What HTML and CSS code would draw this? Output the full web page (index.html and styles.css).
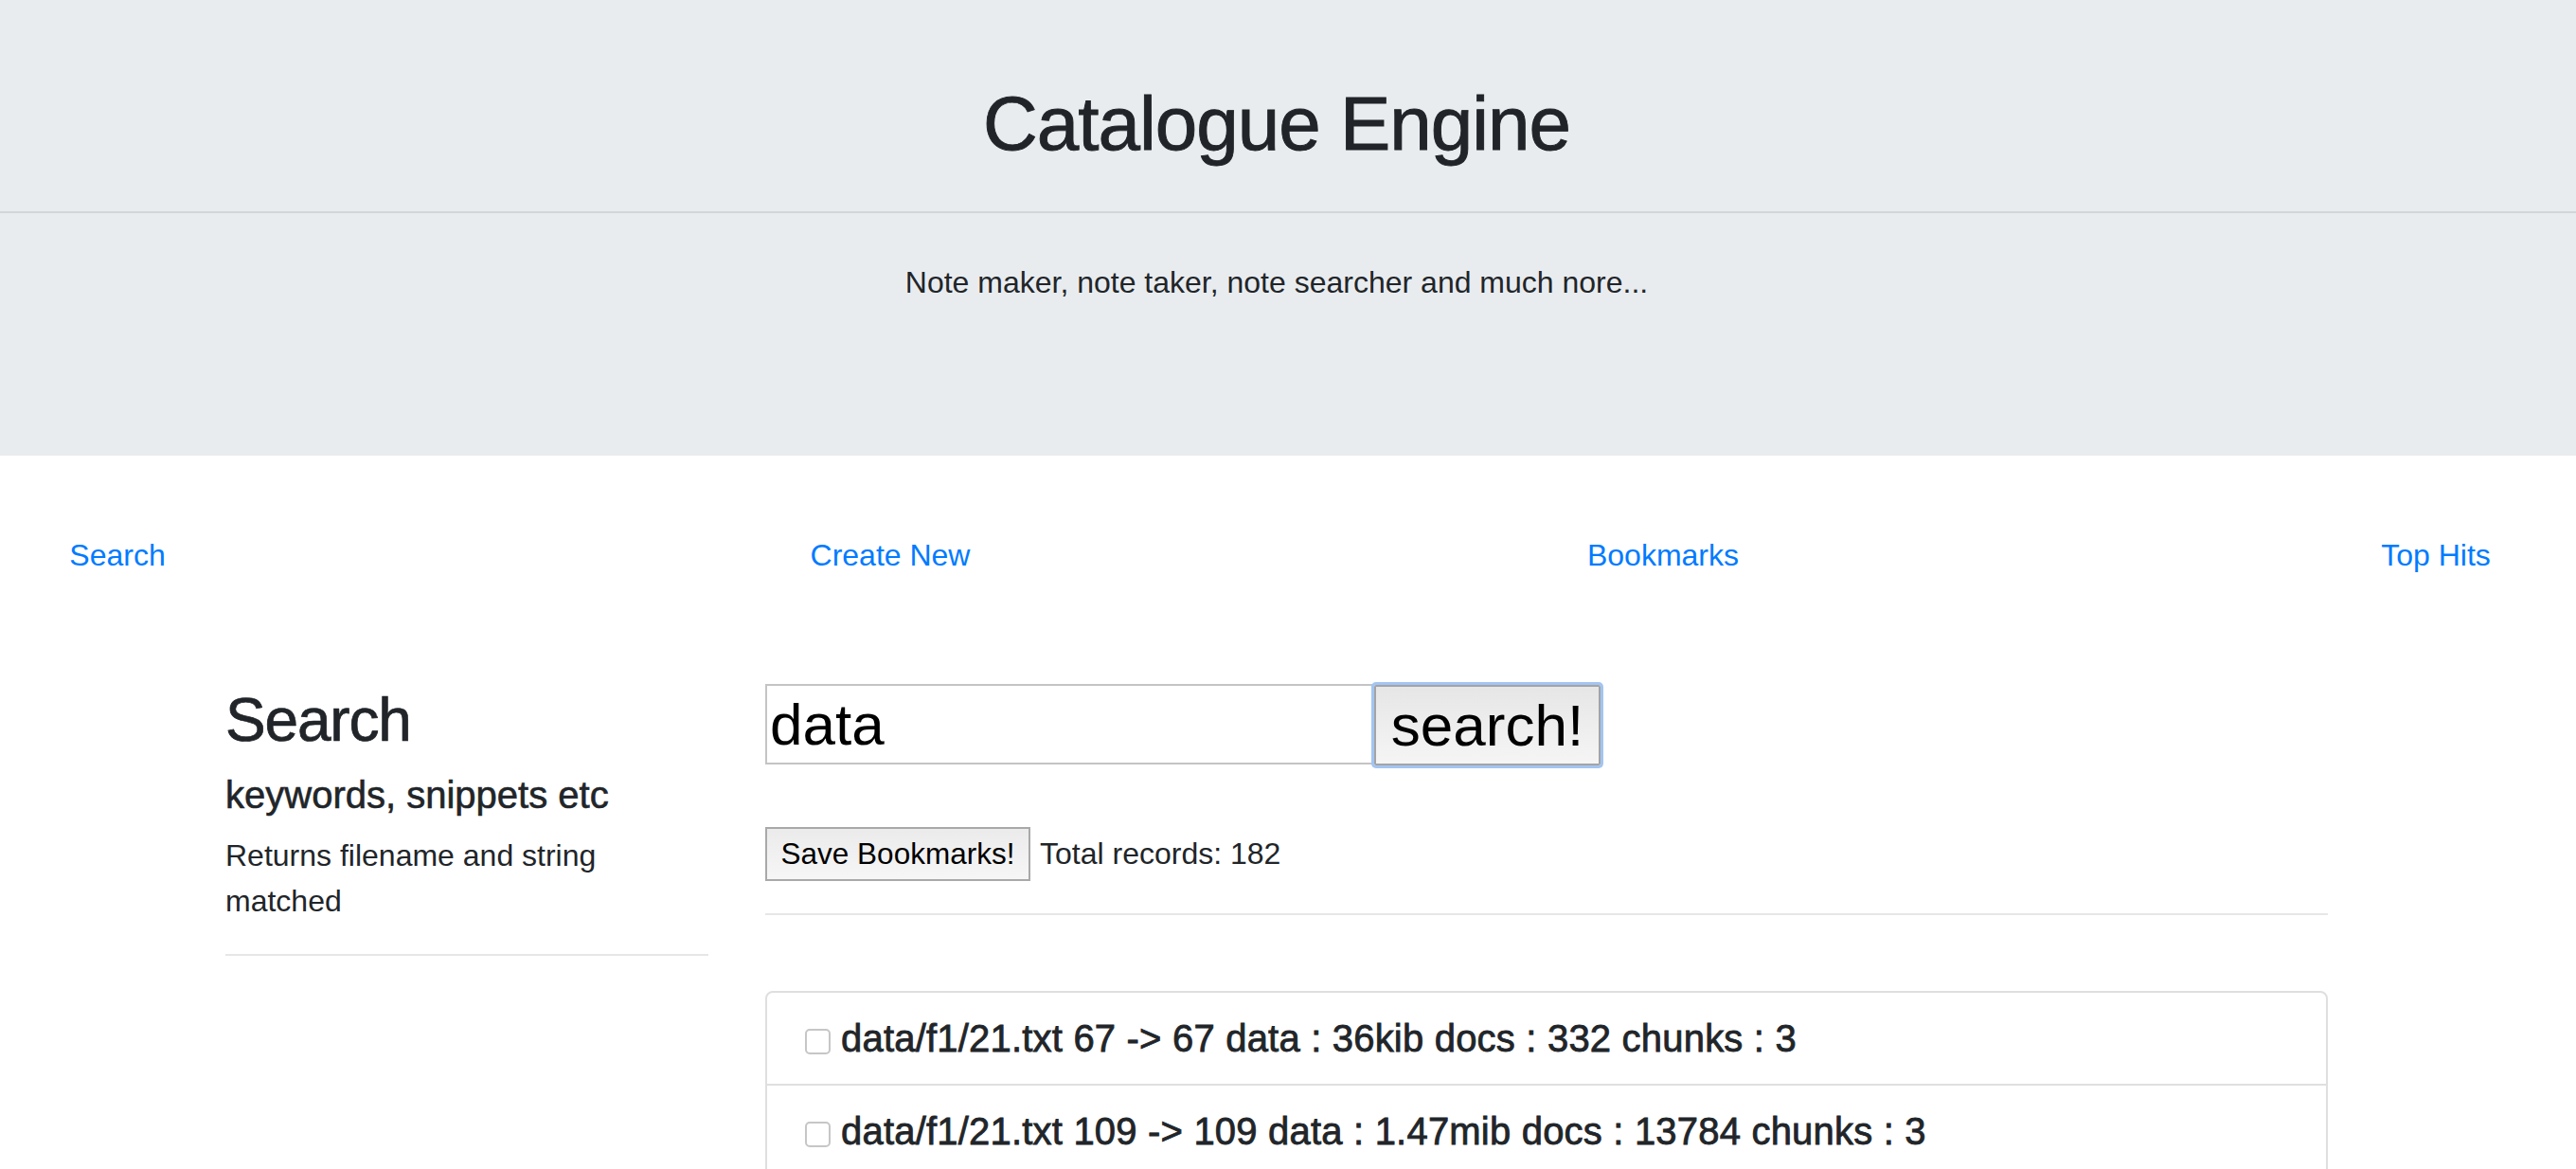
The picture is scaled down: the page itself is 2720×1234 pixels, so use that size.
FILE: index.html
```html
<!DOCTYPE html>
<html lang="en">
<head>
<meta charset="utf-8">
<title>Catalogue Engine</title>
<link rel="stylesheet" href="styles.css">
</head>
<body>
<header class="jumbotron">
  <h1 class="title">Catalogue Engine</h1>
  <hr class="jumbo-rule">
  <p class="lead">Note maker, note taker, note searcher and much nore...</p>
</header>
<div class="page">
  <nav class="nav">
    <a href="#" class="nav-link">Search</a>
    <a href="#" class="nav-link">Create New</a>
    <a href="#" class="nav-link">Bookmarks</a>
    <a href="#" class="nav-link">Top Hits</a>
  </nav>
  <main class="container">
    <aside class="side">
      <h2 class="side-title">Search</h2>
      <h5 class="side-sub">keywords, snippets etc</h5>
      <p class="side-text">Returns filename and string matched</p>
      <hr class="side-rule">
    </aside>
    <section class="results">
      <form class="search-form">
        <input class="search-input" type="text" value="data"><button type="button" class="search-btn">search!</button>
      </form>
      <div class="tools">
        <button type="button" class="save-btn">Save Bookmarks!</button>
        <span class="total">Total records: 182</span>
      </div>
      <hr class="result-rule">
      <ul class="card">
        <li class="row-item"><input type="checkbox" class="pick"><span>data/f1/21.txt 67 -&gt; 67 data : 36kib docs : 332 chunks : 3</span></li>
        <li class="row-item"><input type="checkbox" class="pick"><span>data/f1/21.txt 109 -&gt; 109 data : 1.47mib docs : 13784 chunks : 3</span></li>
      </ul>
    </section>
  </main>
</div>
</body>
</html>
```
FILE: styles.css
```css
* { box-sizing: border-box; }
html, body { overflow: hidden; }
body {
  margin: 0;
  font-family: "Liberation Sans", Arial, sans-serif;
  font-size: 32px;
  line-height: 48px;
  color: #212529;
  background: #fff;
}
.jumbotron {
  background: #e9ecef;
  height: 481px;
  padding: 83px 24px 0 0;
  margin: 0 0 65px;
  text-align: center;
}
.title {
  margin: 0;
  font-size: 80px;
  line-height: 96px;
  font-weight: 400;
  letter-spacing: -1px;
  -webkit-text-stroke: 0.9px #212529;
}
.jumbo-rule {
  margin: 44px -24px 0 0;
  border: 0;
  height: 2px;
  background: #d3d5d8;
}
.lead {
  margin: 49px 0 0;
}
.page { width: 2696px; }
.nav {
  display: flex;
  justify-content: space-between;
}
.nav-link {
  display: block;
  width: 248px;
  padding: 16px 0;
  text-align: center;
  color: #007bff;
  text-decoration: none;
}
.container {
  width: 2280px;
  margin: 96px auto 0;
  padding: 0 30px;
  display: grid;
  grid-template-columns: 510px 1650px;
  column-gap: 60px;
  align-items: start;
}
.side-title {
  margin: 0 0 16px;
  font-size: 64px;
  line-height: 76.8px;
  font-weight: 400;
  letter-spacing: -1.2px;
  -webkit-text-stroke: 0.7px #212529;
}
.side-sub {
  margin: 0 0 16px;
  font-size: 40px;
  line-height: 48px;
  font-weight: 400;
  -webkit-text-stroke: 0.6px #212529;
}
.side-text { margin: 0 0 32px; }
.side-rule, .result-rule {
  margin: 0;
  border: 0;
  height: 2px;
  background: #e6e6e6;
}
.search-form {
  display: flex;
  align-items: flex-start;
  margin: 0;
}
.search-input {
  width: 642px;
  height: 85px;
  margin: 0;
  padding: 0 3px;
  border: 2px solid #c4c4c4;
  font-family: "Liberation Sans", Arial, sans-serif;
  font-size: 62px;
  color: #000;
  background: #fff;
  outline: none;
}
.search-btn {
  width: 239px;
  height: 85px;
  margin: 1px 0 0 1px;
  padding: 0 14px;
  border: 2px solid #a4a4a4;
  border-radius: 2px;
  background: linear-gradient(#e6e6e6, #f5f5f5);
  box-shadow: 0 0 0 3px #a2c5f2;
  font-family: "Liberation Sans", Arial, sans-serif;
  font-size: 62px;
  color: #000;
}
.tools {
  margin-top: 65px;
  display: flex;
  align-items: baseline;
}
.save-btn {
  width: 280px;
  height: 57px;
  margin: 0;
  padding: 0 6px;
  border: 2px solid #a9a9a9;
  background: linear-gradient(#ebebeb, #f6f6f6);
  font-family: "Liberation Sans", Arial, sans-serif;
  font-size: 31.5px;
  color: #000;
}
.total { margin-left: 10px; }
.result-rule { margin-top: 34px; }
.card {
  list-style: none;
  margin: 80px 0 0;
  padding: 0;
  border: 2px solid #dfdfdf;
  border-radius: 8px;
}
.row-item {
  display: flex;
  align-items: center;
  padding: 24px 40px;
  font-size: 40px;
  line-height: 48px;
  letter-spacing: 0.2px;
  -webkit-text-stroke: 0.8px #212529;
}
.row-item + .row-item { border-top: 2px solid #dfdfdf; }
.pick {
  appearance: none;
  -webkit-appearance: none;
  flex: none;
  width: 27px;
  height: 27px;
  margin: 7px 11px 0 0;
  border: 2px solid #c6c6c6;
  border-radius: 5px;
  background: #fff;
}
```
